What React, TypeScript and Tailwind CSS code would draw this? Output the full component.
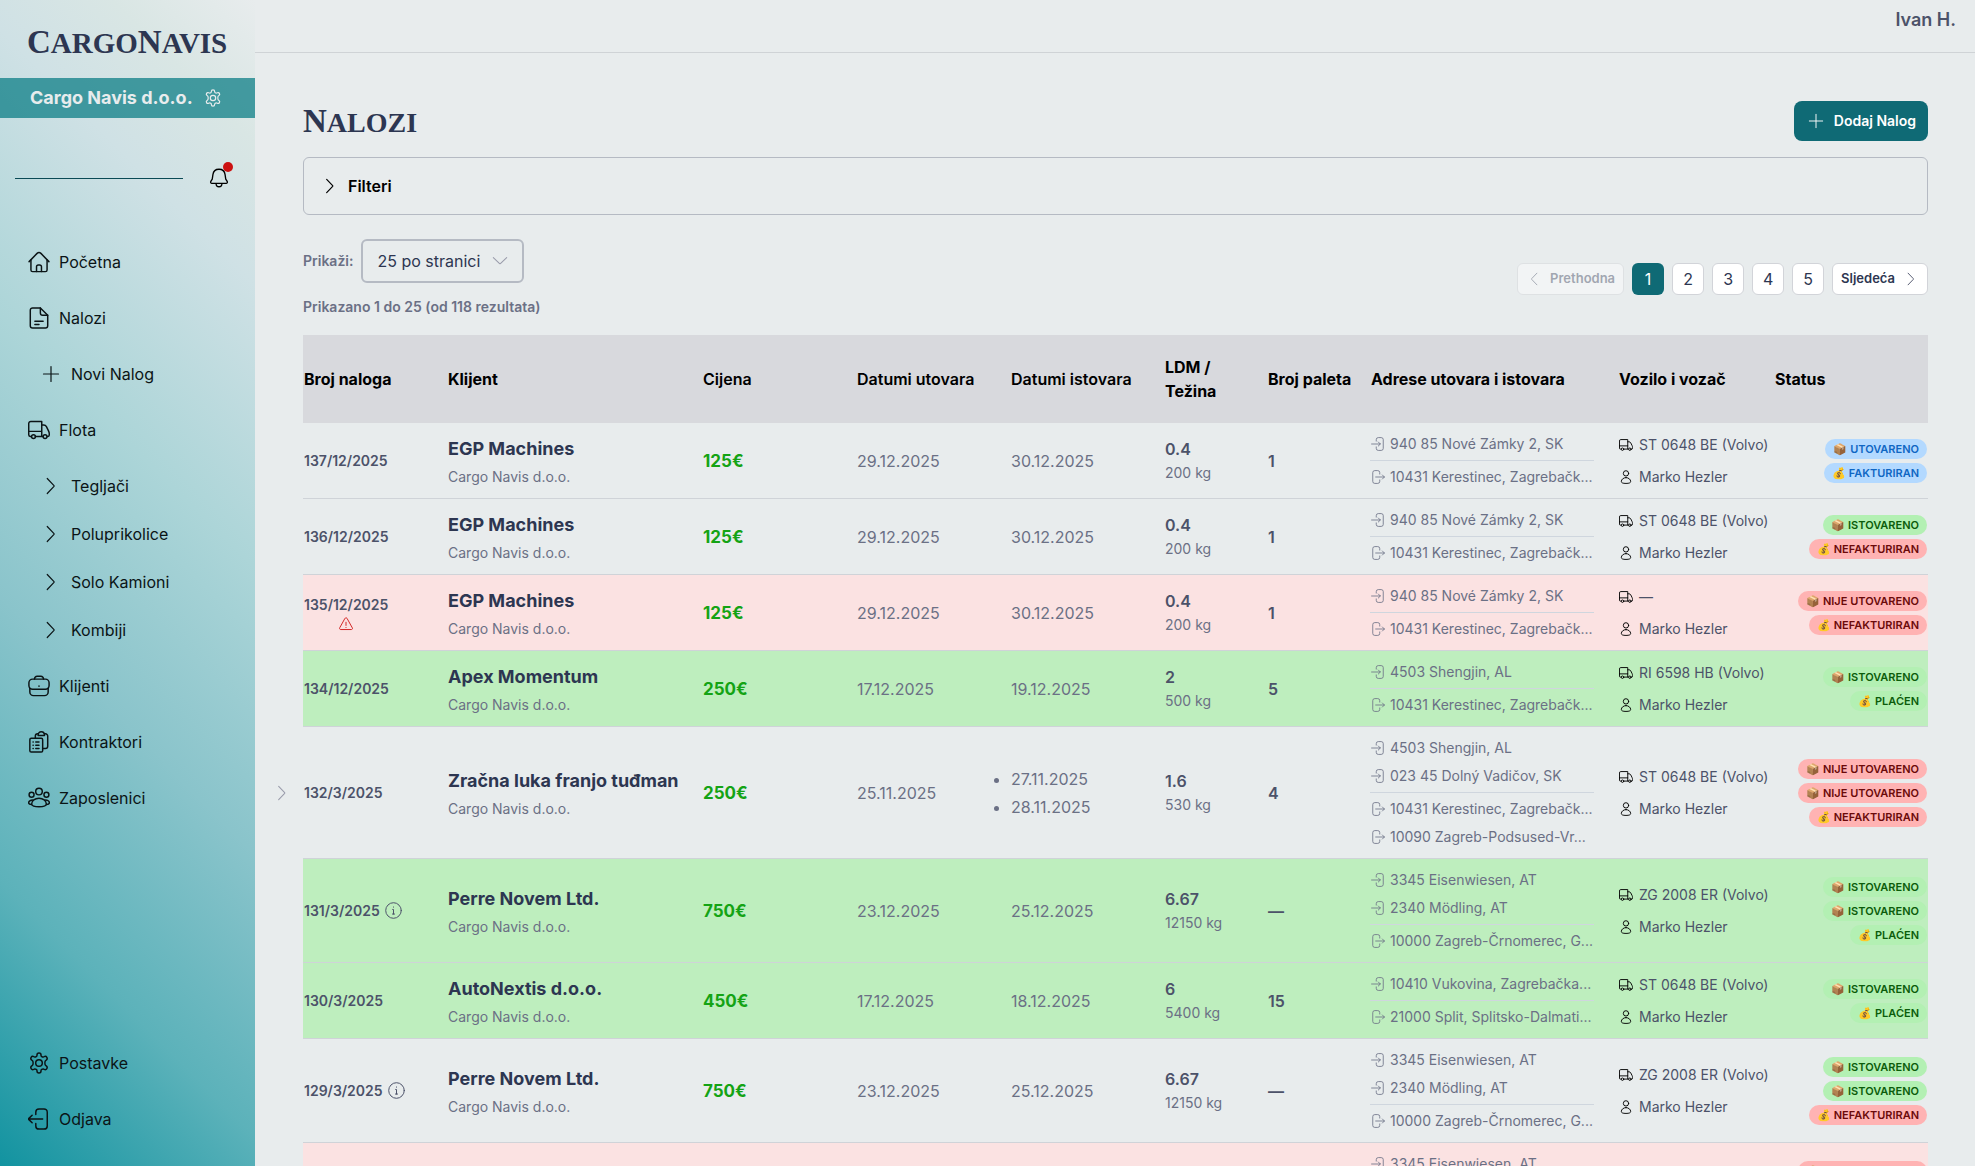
import React from "react";

type IconProps = { className?: string; children?: React.ReactNode; sw?: number };

function Svg({ className = "size-5", children, sw = 1.6 }: IconProps) {
  return (
    <svg viewBox="0 0 24 24" fill="none" stroke="currentColor" strokeWidth={sw} strokeLinecap="round" strokeLinejoin="round" className={"shrink-0 " + className} aria-hidden="true">
      {children}
    </svg>
  );
}

const HomeIcon = (p: IconProps) => (
  <Svg {...p}>
    <path d="M1.2 11.6 9.9 2.6a3 3 0 0 1 4.2 0l8.7 9" />
    <path d="M3.2 9.8v10.9c0 1 .7 1.8 1.8 1.8h14c1.100 0 1.800-.8 1.800-1.800V9.800" />
    <path d="M9.300 22.300v-5c0-1.200.8-2 2-2h1.400c1.200 0 2 .8 2 2v5" />
  </Svg>
);
const FileIcon = (p: IconProps) => (
  <Svg {...p}>
    <path d="M13.500 1H5a2.500 2.500 0 0 0-2.500 2.500v17A2.500 2.500 0 0 0 5 23h14a2.500 2.500 0 0 0 2.500-2.500V9z" />
    <path d="M13.500 1v5.500A2.500 2.500 0 0 0 16 9h5.500M7.500 15.500h9M7.500 19H12" />
  </Svg>
);
const PlusIcon = (p: IconProps) => (
  <Svg {...p}>
    <path d="M12 2v20M2 12h20" />
  </Svg>
);
const TruckIcon = (p: IconProps) => (
  <Svg {...p}>
    <path d="M3.500 19H2.500A1.700 1.700 0 0 1 .8 17.300V5A2.300 2.300 0 0 1 3.100 2.700H15V19H8M15 6.500h2.200c1.300 0 2.300.7 2.900 1.800l2.400 4.900c.5 1 .7 2 .7 3v1.300a1.500 1.500 0 0 1-1.500 1.500h-.5M.8 13.500H15M15 19h1" />
    <circle cx="6" cy="19.200" r="2.100" />
    <circle cx="18.600" cy="19.200" r="2.100" />
  </Svg>
);
const ChevronIcon = (p: IconProps) => (
  <Svg {...p}>
    <path d="m7 2 9 9.400a1 1 0 0 1 0 1.200L7 22" />
  </Svg>
);
const BriefcaseIcon = (p: IconProps) => (
  <Svg {...p}>
    <rect x="1" y="4.500" width="22" height="11" rx="4" />
    <path d="M7 4.500C7.300 2.200 8.500 1.300 10 1.300h4c1.500 0 2.700.9 3 3.200M2 14.500v4a4 4 0 0 0 4 4h12a4 4 0 0 0 4-4v-4" />
    <path d="M12 12v.4" />
  </Svg>
);
const ClipboardsIcon = (p: IconProps) => (
  <Svg {...p}>
    <rect x="2" y="8" width="14" height="15" rx="1.500" />
    <path d="M8 8V5.500A2.500 2.500 0 0 1 10.500 3H11M18 3h1a2.500 2.500 0 0 1 2.500 2.500v11A2.500 2.500 0 0 1 19 19h-3" />
    <path d="M11 4.800c0-2.400 1.400-4 3.500-4s3.500 1.600 3.500 4z" />
    <path d="M5.500 12h.2M8.500 12H12M5.500 15.500h.2M8.500 15.500H12M5.500 19h.2M8.500 19H12" />
  </Svg>
);
const UsersIcon = (p: IconProps) => (
  <Svg {...p}>
    <circle cx="12" cy="5" r="3.600" />
    <circle cx="3.900" cy="8.500" r="2.700" />
    <circle cx="20.100" cy="8.500" r="2.700" />
    <path d="M4 18.500c0-3.500 3.500-6.300 8-6.300s8 2.800 8 6.300c0 1.800-3 3-8 3s-8-1.200-8-3z" />
    <path d="M3.800 19.200C2 19 .7 18.300.7 17.300c0-1.700 2-3.100 4.300-3.100M20.200 19.200c1.800-.2 3.100-.9 3.100-1.900 0-1.700-2-3.100-4.300-3.100" />
  </Svg>
);
const GearIcon = (p: IconProps) => (
  <Svg {...p}>
    <circle cx="12" cy="12" r="3.600" />
    <path d="M9.800 3.300a2.200 2.200 0 0 1 4.400 0v.5c0 .5.300.9.800 1.200.7.400 1.200.6 1.800.4l.9-.4a2.200 2.200 0 0 1 2.200 3.800l-.5.300c-1 .6-1 1.400-1 2.900s0 2.300 1 2.900l.5.300a2.200 2.200 0 0 1-2.200 3.800l-.9-.4c-.6-.2-1.100 0-1.800.4-.5.300-.8.700-.8 1.200v.5a2.200 2.200 0 0 1-4.400 0v-.5c0-.5-.3-.9-.8-1.200-.7-.4-1.200-.6-1.800-.4l-.9.400a2.200 2.200 0 0 1-2.200-3.800l.5-.3c1-.6 1-1.400 1-2.900s0-2.300-1-2.900l-.5-.3a2.200 2.200 0 0 1 2.200-3.800l.9.400c.6.200 1.100 0 1.800-.4.500-.3.800-.7.800-1.200z" />
  </Svg>
);
const OutLeftIcon = (p: IconProps) => (
  <Svg {...p}>
    <path d="M8.500 7V4.500A3.500 3.500 0 0 1 12 1h5.500A3.500 3.500 0 0 1 21 4.500v15a3.500 3.500 0 0 1-3.500 3.500H12a3.500 3.500 0 0 1-3.500-3.500V17M16 12H1M4.500 8 1 11.300a1 1 0 0 0 0 1.400L4.500 16" />
  </Svg>
);
const EnterIcon = (p: IconProps) => (
  <Svg {...p}>
    <path d="M9 7V4.500A3.500 3.500 0 0 1 12.500 1h5A3.500 3.500 0 0 1 21 4.500v15a3.500 3.500 0 0 1-3.500 3.500h-5A3.500 3.500 0 0 1 9 19.500V17M1 12h15M12.500 8.500 16 12l-3.500 3.500" />
  </Svg>
);
const ExitIcon = (p: IconProps) => (
  <Svg {...p}>
    <path d="M15 7V4.500A3.500 3.500 0 0 0 11.500 1h-5A3.500 3.500 0 0 0 3 4.500v15A3.500 3.500 0 0 0 6.500 23h5a3.500 3.500 0 0 0 3.500-3.500V17M8 12h15M19.500 8.500 23 12l-3.500 3.500" />
  </Svg>
);
const PersonIcon = (p: IconProps) => (
  <Svg {...p}>
    <circle cx="12" cy="5.800" r="4.600" />
    <path d="M12 13c-4.500 0-8 3.300-8 6.600C4 22 6.500 23 12 23s8-1 8-3.400c0-3.300-3.500-6.600-8-6.600z" />
  </Svg>
);
const BellIcon = (p: IconProps) => (
  <Svg {...p}>
    <path d="M12 1.500c-4 0-6.800 2.700-7.300 6.500l-.8 5.300-1.700 2.800c-.7 1.200 0 2.300 1.300 2.300h17c1.300 0 2-1.100 1.300-2.300l-1.700-2.800-.8-5.300C18.800 4.200 16 1.500 12 1.500zM8.500 18.500c0 2.500 1.300 4 3.500 4s3.500-1.500 3.500-4" />
  </Svg>
);
const InfoIcon = (p: IconProps) => (
  <Svg {...p}>
    <circle cx="12" cy="12" r="11" />
    <path d="M10.800 10.500H12V17M10.500 17h3M12 7v.3" />
  </Svg>
);
const AlertIcon = (p: IconProps) => (
  <Svg {...p}>
    <path d="M10.300 2.200a2 2 0 0 1 3.400 0l9.200 16.500c.8 1.400-.2 2.800-1.700 2.800H2.800c-1.500 0-2.500-1.400-1.700-2.800zM12 9v5.500M12 17.800v.2" />
  </Svg>
);

type NavItem = { label: string; icon: (p: IconProps) => React.ReactElement; sub?: boolean; tight?: boolean };

const nav: NavItem[] = [
  { label: "Početna", icon: HomeIcon },
  { label: "Nalozi", icon: FileIcon },
  { label: "Novi Nalog", icon: PlusIcon, sub: true },
  { label: "Flota", icon: TruckIcon },
  { label: "Tegljači", icon: ChevronIcon, sub: true },
  { label: "Poluprikolice", icon: ChevronIcon, sub: true, tight: true },
  { label: "Solo Kamioni", icon: ChevronIcon, sub: true, tight: true },
  { label: "Kombiji", icon: ChevronIcon, sub: true, tight: true },
  { label: "Klijenti", icon: BriefcaseIcon },
  { label: "Kontraktori", icon: ClipboardsIcon },
  { label: "Zaposlenici", icon: UsersIcon },
];

function NavLink({ item }: { item: NavItem }) {
  const Icon = item.icon;
  return (
    <li className={item.tight ? "-mt-2" : ""}>
      <a href="#" className={"flex h-10 items-center text-base text-[#0b1416] " + (item.sub ? "gap-[11px] pl-[42px]" : "gap-[9px] pl-7")}>
        <Icon className={item.sub ? "size-[18px]" : "size-[22px]"} />
        {item.label}
      </a>
    </li>
  );
}

type Badge = "utovareno" | "fakturiran" | "istovareno" | "nefakturiran" | "nije" | "placen";
const badges: Record<Badge, { icon: string; text: string; cls: string }> = {
  utovareno: { icon: "📦", text: "UTOVARENO", cls: "bg-[#b3d9ff] text-[#0f66c3]" },
  fakturiran: { icon: "💰", text: "FAKTURIRAN", cls: "bg-[#b3d9ff] text-[#0f66c3]" },
  istovareno: { icon: "📦", text: "ISTOVARENO", cls: "bg-[#b3f0b3] text-[#0b5c0b]" },
  nefakturiran: { icon: "💰", text: "NEFAKTURIRAN", cls: "bg-[#ffb3b3] text-[#6b0a0a]" },
  nije: { icon: "📦", text: "NIJE UTOVARENO", cls: "bg-[#ffb3b3] text-[#6b0a0a]" },
  placen: { icon: "💰", text: "PLAĆEN", cls: "bg-[#b3f0b3] text-[#0b5c0b]" },
};

type Order = {
  no: string;
  info?: boolean;
  alert?: boolean;
  expand?: boolean;
  client: string;
  price: string;
  load: string;
  unload: string[];
  ldm: string;
  kg: string;
  pal: string;
  from: string[];
  to: string[];
  truck: string;
  tags: Badge[];
  tone?: "red" | "green";
};

const kerestinec = "10431 Kerestinec, Zagrebačk...";
const zamky = "940 85 Nové Zámky 2, SK";
const st = "ST 0648 BE (Volvo)";
const egp = { client: "EGP Machines", price: "125€", load: "29.12.2025", unload: ["30.12.2025"], ldm: "0.4", kg: "200 kg", pal: "1", from: [zamky], to: [kerestinec] };
const perre = { client: "Perre Novem Ltd.", price: "750€", load: "23.12.2025", unload: ["25.12.2025"], ldm: "6.67", kg: "12150 kg", pal: "—", from: ["3345 Eisenwiesen, AT", "2340 Mödling, AT"], to: ["10000 Zagreb-Črnomerec, G..."], truck: "ZG 2008 ER (Volvo)" };

const orders: Order[] = [
  { no: "137/12/2025", ...egp, truck: st, tags: ["utovareno", "fakturiran"] },
  { no: "136/12/2025", ...egp, truck: st, tags: ["istovareno", "nefakturiran"] },
  { no: "135/12/2025", ...egp, alert: true, truck: "—", tags: ["nije", "nefakturiran"], tone: "red" },
  { no: "134/12/2025", client: "Apex Momentum", price: "250€", load: "17.12.2025", unload: ["19.12.2025"], ldm: "2", kg: "500 kg", pal: "5", from: ["4503 Shengjin, AL"], to: [kerestinec], truck: "RI 6598 HB (Volvo)", tags: ["istovareno", "placen"], tone: "green" },
  { no: "132/3/2025", expand: true, client: "Zračna luka franjo tuđman", price: "250€", load: "25.11.2025", unload: ["27.11.2025", "28.11.2025"], ldm: "1.6", kg: "530 kg", pal: "4", from: ["4503 Shengjin, AL", "023 45 Dolný Vadičov, SK"], to: [kerestinec, "10090 Zagreb-Podsused-Vr..."], truck: st, tags: ["nije", "nije", "nefakturiran"] },
  { no: "131/3/2025", info: true, ...perre, tags: ["istovareno", "istovareno", "placen"], tone: "green" },
  { no: "130/3/2025", client: "AutoNextis d.o.o.", price: "450€", load: "17.12.2025", unload: ["18.12.2025"], ldm: "6", kg: "5400 kg", pal: "15", from: ["10410 Vukovina, Zagrebačka..."], to: ["21000 Split, Splitsko-Dalmati..."], truck: st, tags: ["istovareno", "placen"], tone: "green" },
  { no: "129/3/2025", info: true, ...perre, tags: ["istovareno", "istovareno", "nefakturiran"] },
  { no: "128/3/2025", info: true, ...perre, tags: ["nije", "nije", "nefakturiran"], tone: "red" },
];

function Address({ text, out }: { text: string; out?: boolean }) {
  return (
    <li className="flex h-7 items-center gap-[5px] pl-px whitespace-nowrap">
      {out ? <ExitIcon className="size-3.5" sw={1.4} /> : <EnterIcon className="size-3.5" sw={1.4} />}
      {text}
    </li>
  );
}

function OrderRow({ o }: { o: Order }) {
  const tone = o.tone === "red" ? "bg-[#fbe2e2]" : o.tone === "green" ? "bg-[#beeebe]" : "";
  return (
    <tr className={"border-b border-[#cfd3d8] text-[#6b7085] " + tone}>
      <td className="relative pl-px text-sm font-semibold text-[#4c5269]">
        {o.expand && (
          <button aria-label="Proširi nalog" className="absolute top-1/2 -left-[29px] -translate-y-1/2 text-[#9a9cab]">
            <ChevronIcon className="size-4" />
          </button>
        )}
        {o.alert ? (
          <div className="inline-flex flex-col items-center gap-0.5">
            <span>{o.no}</span>
            <AlertIcon className="size-3.5 text-[#d01b1b]" />
          </div>
        ) : (
          <div className="flex items-center gap-[5px]">
            {o.no}
            {o.info && <InfoIcon className="size-[17px]" sw={1.4} />}
          </div>
        )}
      </td>
      <td className="pt-1 pl-px">
        <div className="text-lg leading-7 font-bold text-[#2d3651]">{o.client}</div>
        <div className="text-sm leading-7">Cargo Navis d.o.o.</div>
      </td>
      <td className="pt-0.5 pl-px text-[17px] font-bold text-[#14a314]">{o.price}</td>
      <td className="pl-px text-base">{o.load}</td>
      <td className="pl-px text-base">
        {o.unload.length > 1 ? (
          <ul className="list-disc">
            {o.unload.map((d) => (
              <li key={d} className="leading-7">{d}</li>
            ))}
          </ul>
        ) : (
          o.unload[0]
        )}
      </td>
      <td className="pl-px">
        <div className="text-base leading-6 font-semibold text-[#4c5269]">{o.ldm}</div>
        <div className="text-sm leading-6">{o.kg}</div>
      </td>
      <td className="pl-px text-base font-semibold text-[#4c5269]">{o.pal}</td>
      <td className="py-[7px] pr-6 text-sm">
        <ul className="border-b border-[#cfd6de] pb-0.5">
          {o.from.map((a) => (
            <Address key={a} text={a} />
          ))}
        </ul>
        <ul className="pt-0.5">
          {o.to.map((a) => (
            <Address key={a} text={a} out />
          ))}
        </ul>
      </td>
      <td className="pl-px text-sm text-[#4c5269]">
        <div className="flex h-8 items-center gap-1.5 whitespace-nowrap">
          <TruckIcon className="size-3.5 text-black" />
          {o.truck}
        </div>
        <div className="flex h-8 items-center gap-1.5 whitespace-nowrap">
          <PersonIcon className="size-3.5 text-black" />
          Marko Hezler
        </div>
      </td>
      <td className="pt-px pr-px">
        <div className="flex flex-col items-end gap-1">
          {o.tags.map((t, i) => (
            <span key={i} className={"flex h-5 items-center gap-[3px] rounded-full px-2 text-[11px] font-semibold whitespace-nowrap " + badges[t].cls}>
              <span>{badges[t].icon}</span>
              {badges[t].text}
            </span>
          ))}
        </div>
      </td>
    </tr>
  );
}

const columns = [
  { t: "Broj naloga", w: "w-[144px] font-bold" },
  { t: "Klijent", w: "w-[255px] font-bold" },
  { t: "Cijena", w: "w-[154px] font-semibold" },
  { t: "Datumi utovara", w: "w-[154px] font-semibold" },
  { t: "Datumi istovara", w: "w-[154px] font-semibold" },
  { t: "LDM / Težina", w: "w-[103px] pr-4 font-bold" },
  { t: "Broj paleta", w: "w-[103px] font-bold" },
  { t: "Adrese utovara i istovara", w: "w-[248px] font-bold" },
  { t: "Vozilo i vozač", w: "w-[156px] font-bold" },
  { t: "Status", w: "w-[154px] font-bold" },
];

export default function App() {
  return (
    <div className="flex h-screen overflow-hidden bg-[#e8eced] font-['Inter','Noto_Color_Emoji',sans-serif] text-[#2d3651]">
      <aside className="flex w-[255px] shrink-0 flex-col bg-[linear-gradient(45deg,#1293a0_0%,#5cb2ba_20%,#8ac4cb_40%,#acd5d8_60%,#cfe1e5_80%,#d9e6e4_90%,#e8eced_100%)]">
        <div className="flex h-[78px] items-center pt-2 pl-[27px]">
          <a href="#" className="font-['Liberation_Serif',serif] text-[29px] font-bold text-[#2d3651] uppercase">
            <span className="text-[33px]">C</span>argo<span className="text-[33px]">N</span>avis
          </a>
        </div>
        <div className="flex h-10 items-center justify-between bg-[#007880]/70 pr-[33px] pl-[30px] text-[#e8eced]">
          <span className="text-lg font-bold whitespace-nowrap">Cargo Navis d.o.o.</span>
          <button aria-label="Postavke tvrtke">
            <GearIcon className="size-[18px]" />
          </button>
        </div>
        <div className="mt-10 flex h-10 items-center gap-[26px] pr-[26px] pl-[15px]">
          <hr className="flex-1 border-[#0a4a55]" />
          <button aria-label="Obavijesti" className="relative text-black">
            <BellIcon className="size-5" />
            <span className="absolute -top-1.5 -right-1 size-2.5 rounded-full bg-[#cc1111]" />
          </button>
        </div>
        <nav className="mt-11 flex flex-1 flex-col justify-between pb-[27px]" aria-label="Glavni izbornik">
          <ul className="flex flex-col gap-4">
            {nav.map((n) => (
              <NavLink key={n.label} item={n} />
            ))}
          </ul>
          <ul className="flex flex-col gap-4">
            <NavLink item={{ label: "Postavke", icon: GearIcon }} />
            <NavLink item={{ label: "Odjava", icon: OutLeftIcon }} />
          </ul>
        </nav>
      </aside>

      <div className="flex min-w-0 flex-1 flex-col">
        <header className="flex h-[53px] shrink-0 justify-end border-b border-[#cfd3d6] pt-1.5 pr-[19px] text-lg font-semibold text-[#4c5269]">Ivan H.</header>
        <main className="pt-12 pr-[47px] pl-12">
          <div className="flex h-10 items-center justify-between">
            <h1 className="pt-0.5 font-['Liberation_Serif',serif] text-[28px] font-bold uppercase">
              <span className="text-[33px]">N</span>alozi
            </h1>
            <button className="flex h-10 items-center gap-2.5 rounded-lg bg-[#0f6a75] pr-3 pl-3.5 text-sm font-semibold text-white">
              <PlusIcon className="size-4" sw={1.4} />
              Dodaj Nalog
            </button>
          </div>
          <button className="mt-4 flex h-[58px] w-full items-center gap-2.5 rounded-md border border-[#b5bac3] pl-[18px] text-base font-semibold text-black">
            <ChevronIcon className="size-4" sw={1.8} />
            Filteri
          </button>

          <div className="mt-6 flex justify-between">
            <div>
              <div className="flex items-center gap-2">
                <label htmlFor="page-size" className="text-sm font-semibold text-[#6b7085]">Prikaži:</label>
                <div className="relative">
                  <select id="page-size" className="h-11 w-[163px] appearance-none rounded-md border-2 border-[#b5bac3] bg-transparent pl-3.5 text-base text-[#2d3651]">
                    <option>25 po stranici</option>
                  </select>
                  <ChevronIcon className="pointer-events-none absolute top-1/2 right-4 size-4 -translate-y-1/2 rotate-90 text-[#9a9cab]" />
                </div>
              </div>
              <p className="mt-3.5 text-sm font-semibold text-[#6b7085]">Prikazano 1 do 25 (od 118 rezultata)</p>
            </div>
            <div className="mt-6 flex items-start gap-2">
              <button disabled className="flex h-8 items-center gap-2 rounded-md border border-[#d2d4d9] bg-white px-2 text-[13px] font-semibold text-[#4c5269] opacity-45">
                <ChevronIcon className="size-4 rotate-180 p-px" sw={1.6} />
                Prethodna
              </button>
              <button className="size-8 rounded-md bg-[#0f6a75] text-base text-white">1</button>
              {[2, 3, 4, 5].map((n) => (
                <button key={n} className="size-8 rounded-md border border-[#d2d4d9] bg-white text-base">{n}</button>
              ))}
              <button className="flex h-8 items-center gap-2 rounded-md border border-[#d2d4d9] bg-white px-2 text-[13px] font-semibold">
                Sljedeća
                <ChevronIcon className="size-4 p-px text-[#4c5269]" sw={1.6} />
              </button>
            </div>
          </div>

          <table className="mt-[18px] w-full table-fixed border-collapse">
            <thead>
              <tr className="h-[88px] bg-[#d8d9dd] text-left text-base text-black">
                {columns.map((c) => (
                  <th key={c.t} className={"pl-px " + c.w}>{c.t}</th>
                ))}
              </tr>
            </thead>
            <tbody>
              {orders.map((o) => (
                <OrderRow key={o.no} o={o} />
              ))}
            </tbody>
          </table>
        </main>
      </div>
    </div>
  );
}
